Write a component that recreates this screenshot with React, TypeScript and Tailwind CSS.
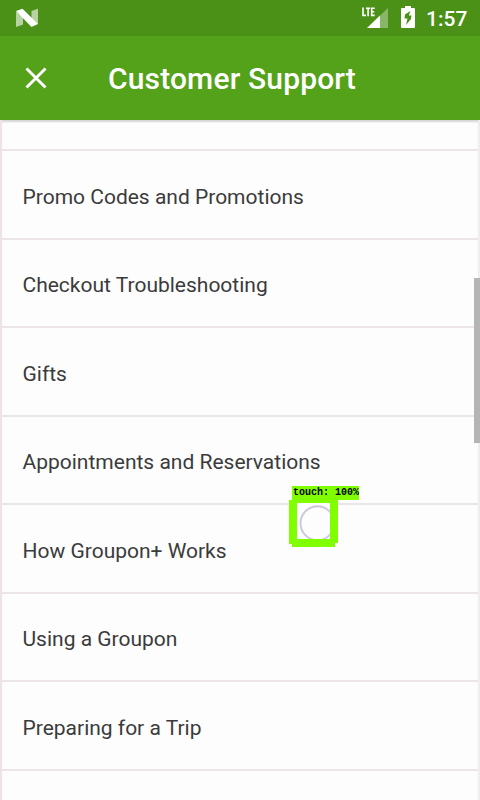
const topics = [
  'Promo Codes and Promotions',
  'Checkout Troubleshooting',
  'Gifts',
  'Appointments and Reservations',
  'How Groupon+ Works',
  'Using a Groupon',
  'Preparing for a Trip',
];

function StatusBar() {
  return (
    <div className="flex h-9 items-center bg-[#4b9118] pl-4 pr-3 text-white">
      <svg width="22" height="20" viewBox="0 0 22 20">
        <path d="M0 3.500 7 9v7.500L0 19z" fill="#fff" opacity=".6" />
        <path d="M22 .8v15.500L15.500 12V3z" fill="#fff" opacity=".6" />
        <path d="M0 3 6.500.8 22 16l-6.500 3z" fill="#fff" />
      </svg>
      <svg className="ml-auto" width="28" height="24" viewBox="0 0 28 24">
        <path d="M28 2v20H7z" fill="#fff" opacity=".35" />
        <path d="M20 9.500V22H7z" fill="#fff" />
        <path d="M3 1.500v7.900h3M6 2.200h4.200M8.100 2.200v8M14.700 2.200h-3v7.200h3M11.700 5.800h2.600" fill="none" stroke="#fff" strokeWidth="1.600" />
      </svg>
      <svg className="ml-[13px] -mt-0.5" width="14" height="22" viewBox="0 0 14 22">
        <path fillRule="evenodd" fill="#fff" d="M4 0h6v2h3q1 0 1 1v18q0 1-1 1H1q-1 0-1-1V3q0-1 1-1h3zM9.500 5 4 8.500 3.500 12.500h3L5 19l5-6 .5-3.500H7.800z" />
      </svg>
      <span className="ml-[11px] w-[42px] whitespace-nowrap pt-px text-[21px] font-medium leading-9">1:57</span>
    </div>
  );
}

function TouchMarker() {
  return (
    <div className="absolute left-[289px] top-[486px] h-[61px] w-[70px]">
      <svg className="absolute inset-0" width="70" height="61" viewBox="0 0 70 61">
        <path d="M8 17h33v36H8z" fill="#fdfdfd" />
        <circle cx="28.500" cy="37.300" r="17" fill="none" stroke="#d0c9de" strokeWidth="2" />
        <path fillRule="evenodd" fill="#80ff00" d="M3 0h67v14H49v43h-3v4H3v-3H0V14h3zM8 17v36h33V17z" />
      </svg>
      <span className="absolute left-[4px] top-0 whitespace-pre font-['Liberation_Mono',monospace] text-[10px] font-bold leading-[14px] text-black">touch: 100%</span>
    </div>
  );
}

export default function App() {
  return (
    <div className="relative flex h-[800px] w-[480px] flex-col overflow-hidden bg-[#fdfdfd] font-[Roboto,sans-serif]">
      <StatusBar />
      <header className="flex h-[84px] shrink-0 items-center bg-[#54a219] text-white">
        <svg className="ml-[25px]" width="22" height="22" viewBox="0 0 22 22">
          <path d="M1.500 1.500 20.500 20.500M20.500 1.500 1.500 20.500" stroke="#fff" strokeWidth="2.900" />
        </svg>
        <h1 className="ml-[61px] whitespace-nowrap pt-0.5 text-[30px] font-medium leading-9 tracking-[0.15px]">Customer Support</h1>
      </header>
      <main className="flex-1 overflow-hidden border-x-2 border-l-[#eee4e8] border-r-[#eeeeee] shadow-[inset_0_3px_2px_-1px_#d4d4d4]">
        <div className="h-[31px] border-b-2 border-[#ebe5e8]" />
        <ul>
          {topics.map((topic) => (
            <li key={topic} className="flex h-[88.500px] items-center border-b-2 border-[#ebe5e8] pl-[20.500px] pt-[6px] text-[21px] text-[#3b3b3b]">
              {topic}
            </li>
          ))}
        </ul>
      </main>
      <div className="absolute right-0 top-[278px] h-[165px] w-1.5 bg-[#b5b5b5]" />
      <TouchMarker />
    </div>
  );
}
